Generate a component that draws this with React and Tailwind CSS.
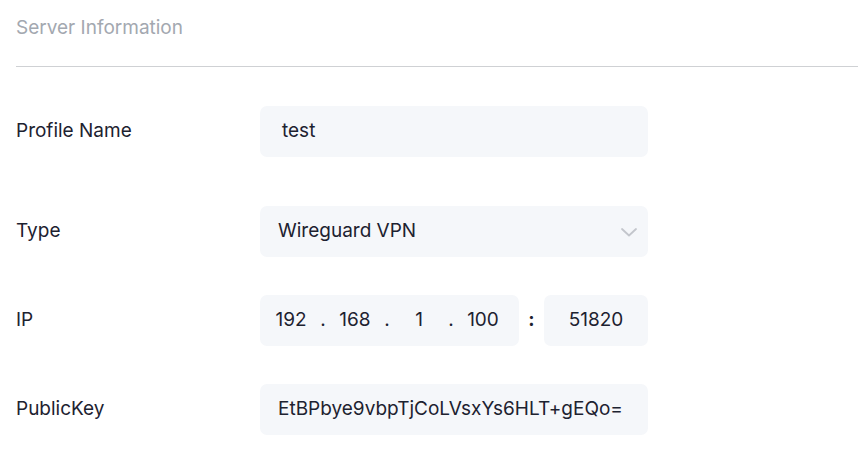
function Row({ label, className = '', children }) {
  return (
    <div className={`flex items-center ${className}`}>
      <div className="w-[244px] shrink-0 text-[19px] text-[#1d2230]">{label}</div>
      {children}
    </div>
  );
}

function App() {
  const box = 'h-[51px] rounded-[7px] bg-[#f5f7fa] flex items-center text-[19px] text-[#1d2230]';

  return (
    <div className="min-h-screen bg-white pl-4 pr-[3px]" style={{ fontFamily: 'Inter, "Noto Sans", sans-serif' }}>
      <div className="pt-[14px] pb-[23px] text-[19px] text-[#a3a8b0]">Server Information</div>
      <div className="h-px bg-[#cfd1d4]" />

      <Row label="Profile Name" className="mt-[39px]">
        <div className={`${box} w-[388px] pl-[22px]`}>test</div>
      </Row>

      <Row label="Type" className="mt-[49px]">
        <div className={`${box} w-[388px] pl-[18px] pr-[11px] justify-between`}>
          <span>Wireguard VPN</span>
          <svg width="16" height="9" viewBox="0 0 16 9" fill="none" className="mt-[2px]">
            <polyline points="1,1 8,7.5 15,1" stroke="#c3c6cc" strokeWidth="1.8" strokeLinecap="round" strokeLinejoin="round" />
          </svg>
        </div>
      </Row>

      <Row label="IP" className="mt-[38px]">
        <div className={`${box} w-[259px] pl-[5px]`}>
          <span className="w-[52px] text-center">192</span>
          <span className="w-[12px] text-center">.</span>
          <span className="w-[52px] text-center">168</span>
          <span className="w-[12px] text-center">.</span>
          <span className="w-[52px] text-center">1</span>
          <span className="w-[12px] text-center">.</span>
          <span className="w-[52px] text-center">100</span>
        </div>
        <div className="w-[25px] text-center text-[19px] font-bold text-[#1d2230]">:</div>
        <div className={`${box} w-[104px] justify-center`}>51820</div>
      </Row>

      <Row label="PublicKey" className="mt-[38px]">
        <div className={`${box} w-[388px] pl-[18px] overflow-hidden whitespace-nowrap`}>
          EtBPbye9vbpTjCoLVsxYs6HLT+gEQo=
        </div>
      </Row>
    </div>
  );
}

export default App;
